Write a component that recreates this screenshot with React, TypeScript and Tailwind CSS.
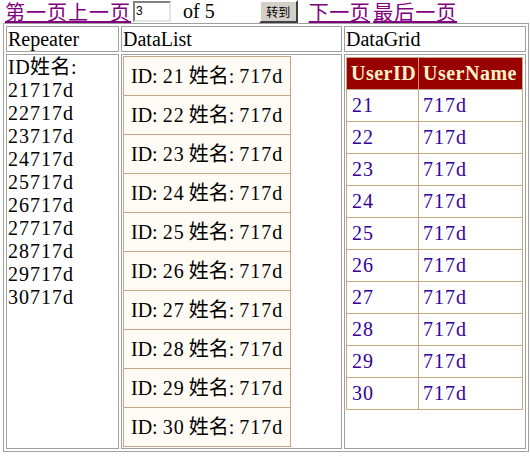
import React from "react";

const serif = { fontFamily: '"Liberation Serif", "Noto Sans CJK SC", serif' };
const cjk = { fontFamily: '"Noto Sans CJK SC", "Liberation Serif", serif' };

const ids = [21, 22, 23, 24, 25, 26, 27, 28, 29, 30];

export default function App() {
  return (
    <div className="w-[530px] h-[456px] bg-white overflow-hidden text-black" style={serif}>
      {/* pager bar */}
      <div className="flex items-start h-[23px] pl-[5px]">
        <span className="text-[20px] leading-[23px] tracking-[1px] text-[#800080] underline underline-offset-[1px]" style={cjk}>
          第一页上一页
        </span>
        <div
          className="ml-[2px] mt-[1px] w-[38px] h-[21px] border-2 border-t-[#808080] border-l-[#808080] border-b-[#e4e4e4] border-r-[#e4e4e4] bg-white text-[12px] leading-[17px] pl-[1px]"
          style={{ fontFamily: '"Liberation Sans", sans-serif' }}
        >
          3
        </div>
        <span className="ml-[12px] text-[20px] leading-[23px]" style={serif}>
          of 5
        </span>
        <div
          className="ml-[44px] w-[39px] h-[23px] bg-[#d4d0c8] border-2 border-t-[#ffffff] border-l-[#ffffff] border-b-[#404040] border-r-[#404040] text-[12px] leading-[19px] text-center"
          style={cjk}
        >
          转到
        </div>
        <span className="ml-[11px] text-[20px] leading-[23px] tracking-[0.5px] text-[#800080] underline underline-offset-[1px]" style={cjk}>
          下一页
        </span>
        <span className="ml-[3px] text-[20px] leading-[23px] tracking-[1px] text-[#800080] underline underline-offset-[1px]" style={cjk}>
          最后一页
        </span>
      </div>

      {/* outer table */}
      <div className="ml-[3px] w-[526px] border border-[#a0a0a0] p-[2px] flex flex-col gap-[2px]">
        <div className="flex gap-[2px] h-[26px]">
          <div className="w-[113px] border border-[#a0a0a0] px-[1px] pt-[1px] text-[20px] leading-[23px]">Repeater</div>
          <div className="w-[221px] border border-[#a0a0a0] px-[1px] pt-[1px] text-[20px] leading-[23px]">DataList</div>
          <div className="flex-1 border border-[#a0a0a0] px-[1px] pt-[1px] text-[20px] leading-[23px]">DataGrid</div>
        </div>
        <div className="flex gap-[2px] h-[395px]">
          {/* Repeater */}
          <div className="w-[113px] border border-[#a0a0a0] p-[1px] text-[20px] leading-[23px]">
            <div className="tracking-[0.5px]">ID姓名:</div>
            {ids.map((id) => (
              <div key={id} className="tracking-[1px]">
                {id}717d
              </div>
            ))}
          </div>
          {/* DataList */}
          <div className="w-[221px] border border-[#a0a0a0] p-[1px]">
            <div className="w-[168px] border border-[#c4a882] bg-[#fffcf5] flex flex-col">
              {ids.map((id, i) => (
                <div
                  key={id}
                  className={`flex items-center pl-[7px] text-[20px] leading-[23px] whitespace-nowrap ${
                    i > 0 ? "border-t border-[#c4a882] h-[39px]" : "h-[38px]"
                  }`}
                >
                  ID: <span className="tracking-[1px] ml-[5px] mr-[4px]">{id}</span>姓名: <span className="tracking-[1px] ml-[5px]">717d</span>
                </div>
              ))}
            </div>
          </div>
          {/* DataGrid */}
          <div className="flex-1 border border-[#a0a0a0] p-[1px]">
            <div className="mt-[1px] w-[177px] border border-[#c4a882] bg-white">
              <div className="flex h-[31px] bg-[#990000] text-[#fff2c8] font-bold text-[20px] leading-[23px] tracking-[0.5px]">
                <div className="w-[72px] border-r border-[#cc9966] pl-[4px] flex items-center">UserID</div>
                <div className="flex-1 pl-[4px] flex items-center whitespace-nowrap">UserName</div>
              </div>
              {ids.map((id) => (
                <div key={id} className="flex h-[32px] border-t border-[#c4a882] text-[#330099] text-[20px] leading-[23px] tracking-[1px]">
                  <div className="w-[72px] border-r border-[#c4a882] pl-[5px] flex items-center">{id}</div>
                  <div className="flex-1 pl-[4px] flex items-center">717d</div>
                </div>
              ))}
            </div>
          </div>
        </div>
      </div>
    </div>
  );
}
